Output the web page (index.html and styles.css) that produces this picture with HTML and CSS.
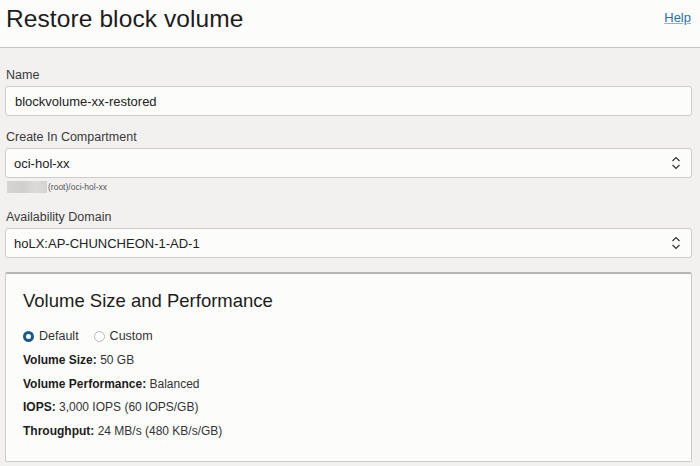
FILE: index.html
```html
<!DOCTYPE html>
<html>
<head>
<meta charset="utf-8">
<link rel="stylesheet" href="styles.css">
</head>
<body>
<header class="header">
  <h1 class="title">Restore block volume</h1>
  <a class="help" href="#">Help</a>
</header>
<main class="form">
  <div class="field">
    <label class="label">Name</label>
    <div class="input">blockvolume-xx-restored</div>
  </div>
  <div class="field">
    <label class="label">Create In Compartment</label>
    <div class="input select">
      <span>oci-hol-xx</span>
      <svg class="updown" width="10" height="14" viewBox="0 0 10 14"><path d="M1.5 5 L5 1.5 L8.5 5 M1.5 9 L5 12.5 L8.5 9" fill="none" stroke="#333" stroke-width="1.2"/></svg>
    </div>
    <div class="crumb"><span class="blur"></span><span>(root)/oci-hol-xx</span></div>
  </div>
  <div class="field">
    <label class="label">Availability Domain</label>
    <div class="input select">
      <span>hoLX:AP-CHUNCHEON-1-AD-1</span>
      <svg class="updown" width="10" height="14" viewBox="0 0 10 14"><path d="M1.5 5 L5 1.5 L8.5 5 M1.5 9 L5 12.5 L8.5 9" fill="none" stroke="#333" stroke-width="1.2"/></svg>
    </div>
  </div>
  <section class="panel">
    <h2 class="panel-title">Volume Size and Performance</h2>
    <div class="radios">
      <span class="radio"><span class="dot on"></span>Default</span>
      <span class="radio"><span class="dot"></span>Custom</span>
    </div>
    <p class="row"><b>Volume Size:</b> 50 GB</p>
    <p class="row"><b>Volume Performance:</b> Balanced</p>
    <p class="row"><b>IOPS:</b> 3,000 IOPS (60 IOPS/GB)</p>
    <p class="row"><b>Throughput:</b> 24 MB/s (480 KB/s/GB)</p>
  </section>
</main>
</body>
</html>
```
FILE: styles.css
```css
html, body {
  margin: 0;
  padding: 0;
  background: #f2f1f0;
  font-family: "Liberation Sans", Arial, sans-serif;
  color: #1f1f1f;
}
.header {
  height: 47px;
  background: #fcfcfb;
  border-bottom: 1px solid #c9c5c1;
  display: flex;
  justify-content: space-between;
  align-items: flex-start;
  padding: 0 9px 0 6px;
}
.title {
  margin: 5px 0 0 0;
  font-size: 24.5px;
  font-weight: normal;
  color: #1c1c1c;
  letter-spacing: 0.1px;
}
.help {
  margin-top: 10px;
  font-size: 13px;
  color: #2f6f9f;
  text-decoration: underline;
  text-decoration-color: #9bb0c2;
}
.form {
  padding: 20px 8px 0 5px;
}
.field {
  margin-bottom: 14px;
}
.label {
  display: block;
  font-size: 12.5px;
  color: #3a3a3a;
  margin: 0 0 3px 1px;
  line-height: 15px;
}
.input {
  height: 28px;
  border: 1px solid #cfcbc7;
  border-radius: 3px;
  background: #fcfcfb;
  display: flex;
  align-items: center;
  padding: 0 9px;
  font-size: 13px;
  color: #222;
}
.select {
  justify-content: space-between;
  padding: 0 10px 0 8px;
}
.updown {
  display: block;
}
.crumb {
  display: flex;
  align-items: center;
  gap: 1px;
  margin: 3px 0 17px 2px;
  font-size: 8.5px;
  color: #555;
  height: 12px;
}
.blur {
  width: 40px;
  height: 12px;
  background: linear-gradient(90deg, #d6d5d4, #cfcecd 40%, #dcdbda 70%, #d3d2d1);
}
.panel {
  margin-top: 7px;
  background: #fcfcfb;
  border: 1px solid #cdcac6;
  border-top: 2px solid #b9b6b2;
  border-radius: 2px;
  padding: 16px 17px 18px 17px;
  height: 153px;
}
.panel-title {
  margin: 0 0 17px 0;
  font-size: 18.5px;
  font-weight: normal;
  color: #1c1c1c;
}
.radios {
  display: flex;
  gap: 15px;
  font-size: 12.5px;
  color: #333;
  margin-bottom: 10px;
}
.radio {
  display: flex;
  align-items: center;
  gap: 5px;
}
.dot {
  width: 9px;
  height: 9px;
  border-radius: 50%;
  border: 1px solid #b8b8b8;
  background: #fff;
  box-sizing: content-box;
}
.dot.on {
  border: 3px solid #1e5a86;
  width: 5px;
  height: 5px;
  background: #fff;
}
.row {
  margin: 0 0 9px 0;
  font-size: 12px;
  line-height: 14.5px;
  color: #333;
}
.row b {
  color: #1c1c1c;
}
```
